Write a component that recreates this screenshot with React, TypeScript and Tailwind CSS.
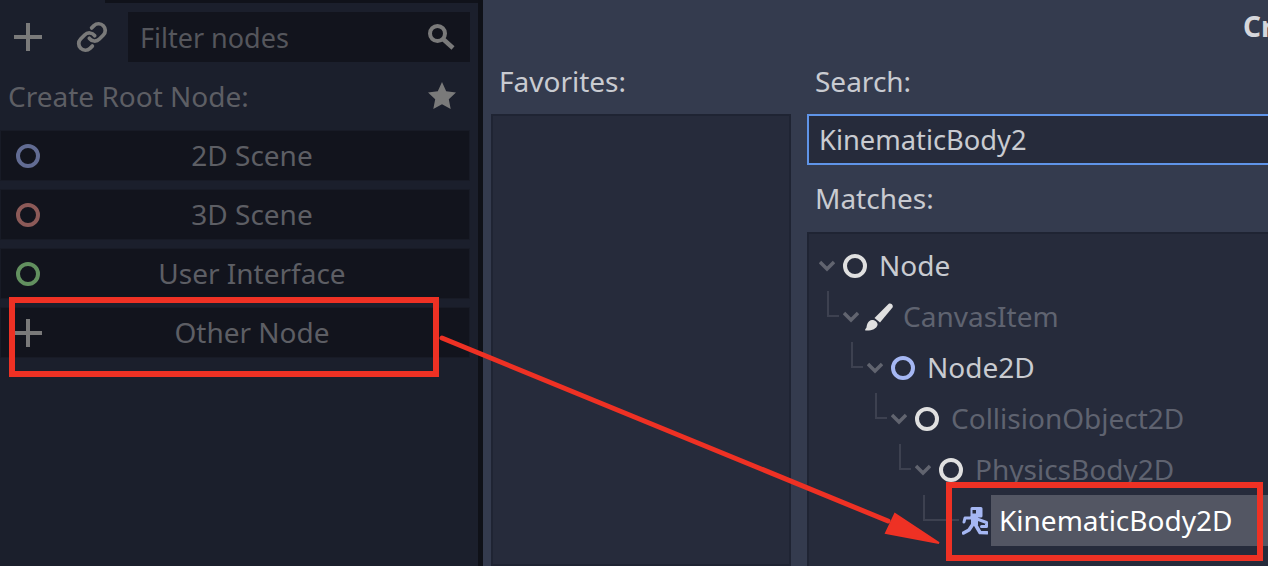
import { Link } from "lucide-react";

const sceneButtons = [
  { label: "2D Scene", ring: "border-[#626c93]" },
  { label: "3D Scene", ring: "border-[#8c5a58]" },
  { label: "User Interface", ring: "border-[#62905f]" },
  { label: "Other Node", ring: "" },
];

const treeRows = [
  { label: "Node", row: "pl-[10px]", line: "", text: "text-[#c9cbd1]", ring: "border-[#e0e0e0]" },
  { label: "CanvasItem", row: "pl-[34px]", line: "left-[18px]", text: "text-[#5f6370]", ring: "" },
  { label: "Node2D", row: "pl-[58px]", line: "left-[42px]", text: "text-[#c9cbd1]", ring: "border-[#a5b7f3]" },
  { label: "CollisionObject2D", row: "pl-[82px]", line: "left-[66px]", text: "text-[#5f6370]", ring: "border-[#e0e0e0]" },
  { label: "PhysicsBody2D", row: "pl-[106px]", line: "left-[90px]", text: "text-[#5f6370]", ring: "border-[#e0e0e0]" },
];

function PlusIcon() {
  return (
    <svg width="28" height="28" viewBox="0 0 28 28" className="shrink-0">
      <path d="M12 0h4v12h12v4H16v12h-4V16H0v-4h12z" fill="#7a7a7a" />
    </svg>
  );
}

function SearchIcon() {
  return (
    <svg width="28" height="28" viewBox="0 0 28 28" className="shrink-0">
      <circle cx="10.500" cy="10.500" r="7.500" fill="none" stroke="#7a7a7a" strokeWidth="4" />
      <path d="M16 16 26 25" stroke="#7a7a7a" strokeWidth="4.500" />
    </svg>
  );
}

function StarIcon() {
  return (
    <svg width="28" height="28" viewBox="0 0 28 28" className="shrink-0">
      <path d="M14 0 18.200 9.300 28 10.500 20.800 17.300 22.700 27 14 22.200 5.300 27 7.200 17.300 0 10.500 9.800 9.300z" fill="#7a7a7a" />
    </svg>
  );
}

function Chevron() {
  return (
    <svg width="16" height="16" viewBox="0 0 16 16" className="shrink-0">
      <path d="M1 4 8 11 15 4" fill="none" stroke="#61646f" strokeWidth="3.500" />
    </svg>
  );
}

function BrushIcon() {
  return (
    <svg width="28" height="28" viewBox="0 0 28 28" className="shrink-0">
      <path d="M23.500 1C25.500-.5 28.800 1.800 27.500 4.500L15 19.500 9.500 15z" fill="#e0e0e0" />
      <path d="M7 17c3 0 6 2.500 5.500 5-1 4-6.500 6-12 5.500-1-.5 0-1.500 1-3C2 21 3 17.500 7 17z" fill="#e0e0e0" />
    </svg>
  );
}

function KinematicIcon() {
  return (
    <svg width="26" height="28" viewBox="0 0 26 28" className="shrink-0">
      <path
        fillRule="evenodd"
        d="M10 0h9a1.500 1.500 0 0 1 1.500 1.500V9A1.500 1.500 0 0 1 19 10.500h-3V18H9V10.500A1 1 0 0 1 8.500 9V1.500A1.500 1.500 0 0 1 10 0zM10.500 3v3.500H14V3z"
        fill="#a5b7f3"
      />
      <g fill="none" stroke="#a5b7f3" strokeLinejoin="round" strokeLinecap="round">
        <path d="M2 15 3 11 10 11" strokeWidth="3" />
        <path d="M15 12 24.500 15.500 24.500 19.500 19.500 19.500" strokeWidth="3" />
        <path d="M13 17 18 25.500 25 25.800" strokeWidth="3.500" />
        <path d="M11 17 7 23 1.500 26" strokeWidth="3.500" />
      </g>
    </svg>
  );
}

export default function App() {
  return (
    <div className="relative flex h-[566px] w-[1268px] overflow-hidden bg-[#343b4e] font-['Noto_Sans',sans-serif] text-[28px]">
      {/* Dimmed scene dock */}
      <div className="w-[478px] shrink-0 bg-[#1b1f2c]">
        <div className="ml-[105px] h-[3px] bg-[#10121a]" />
        <div className="mt-[9px] flex h-[50px] items-center pr-2">
          <div className="flex w-[128px] shrink-0 items-center pl-[14px]">
            <PlusIcon />
            <Link className="ml-[34px] h-[32px] w-[32px] text-[#7a7a7a]" strokeWidth={2.800} />
          </div>
          <div className="flex h-[50px] flex-1 items-center justify-between bg-[#12141d] pl-[12px] pr-[15px] text-[27px] text-[#55565c]">
            <span className="mt-[2px]">Filter nodes</span>
            <SearchIcon />
          </div>
        </div>
        <div className="flex h-[68px] items-center justify-between pl-[8px] pr-[22px] text-[#5d5e64]">
          <span>Create Root Node:</span>
          <StarIcon />
        </div>
        <div className="flex flex-col gap-2 pr-2">
          {sceneButtons.map((b) => (
            <div key={b.label} className="relative flex h-[51px] items-center justify-center border border-[#181b26] bg-[#12141d] pl-[34px] text-[#5d5e64]">
              <span className="absolute left-[13px] flex h-[28px] w-[28px] items-center justify-center">
                {b.ring ? <span className={`h-[24px] w-[24px] rounded-full border-[4px] ${b.ring}`} /> : <PlusIcon />}
              </span>
              <span className="mb-[2px]">{b.label}</span>
            </div>
          ))}
        </div>
      </div>
      <div className="w-[5px] shrink-0 bg-[#0f1118]" />

      {/* Create New Node dialog */}
      <div className="relative flex-1 pl-2 text-[#c9cbd1]">
        <div className="flex h-[49px] justify-start pl-[752px] pt-[5px]">
          <span className="whitespace-nowrap font-bold text-[#d6d7dc]">Cr</span>
        </div>
        <div className="flex gap-4">
          <div className="w-[300px] shrink-0">
            <div className="flex h-[65px] items-center pb-[2px] pl-[8px]">Favorites:</div>
            <div className="h-[452px] border-2 border-[#1f2433] bg-[#262b3b]" />
          </div>
          <div className="w-[800px] shrink-0">
            <div className="flex h-[65px] items-center pb-[2px] pl-[8px]">Search:</div>
            <div className="flex h-[51px] items-center border-2 border-[#5f94e8] bg-[#262b3b] pl-[10px] pt-[2px] text-[27.300px]">KinematicBody2</div>
            <div className="flex h-[67px] items-center pb-[2px] pl-[8px]">Matches:</div>
            <div className="h-[400px] border-2 border-[#1f2433] bg-[#262b3b] pt-[6px]">
              {treeRows.map((r) => (
                <div key={r.label} className={`relative flex h-[51px] items-center ${r.row}`}>
                  {r.line && <span className={`absolute top-0 h-[26px] w-[12px] border-b-2 border-l-2 border-[#3d4150] ${r.line}`} />}
                  <Chevron />
                  {r.ring ? (
                    <span className={`ml-[8px] mr-[12px] h-[24px] w-[24px] shrink-0 rounded-full border-[4px] ${r.ring}`} />
                  ) : (
                    <span className="ml-[6px] mr-[10px]"><BrushIcon /></span>
                  )}
                  <span className={`mb-[2px] ${r.text}`}>{r.label}</span>
                </div>
              ))}
              <div className="relative flex h-[51px] items-center pl-[153px]">
                <span className="absolute left-[114px] top-0 h-[26px] w-[36px] border-b-2 border-l-2 border-[#3d4150]" />
                <KinematicIcon />
                <span className="ml-[3px] flex h-full flex-1 items-center bg-[#535663] pb-[2px] pl-[8px] text-white">KinematicBody2D</span>
              </div>
            </div>
          </div>
        </div>
      </div>

      {/* Annotation overlay */}
      <div className="absolute left-[9px] top-[297px] h-[80px] w-[430px] border-[6px] border-[#ee3124]" />
      <div className="absolute left-[946px] top-[482px] h-[79px] w-[317px] border-[6px] border-[#ee3124]" />
      <svg className="absolute left-0 top-0" width="1268" height="566" viewBox="0 0 1268 566">
        <path d="M442 338 888 521" stroke="#ee3124" strokeWidth="5" strokeLinecap="round" />
        <path d="M939 543 886 533 895 514z" fill="#ee3124" stroke="#ee3124" strokeWidth="2" />
      </svg>
    </div>
  );
}
